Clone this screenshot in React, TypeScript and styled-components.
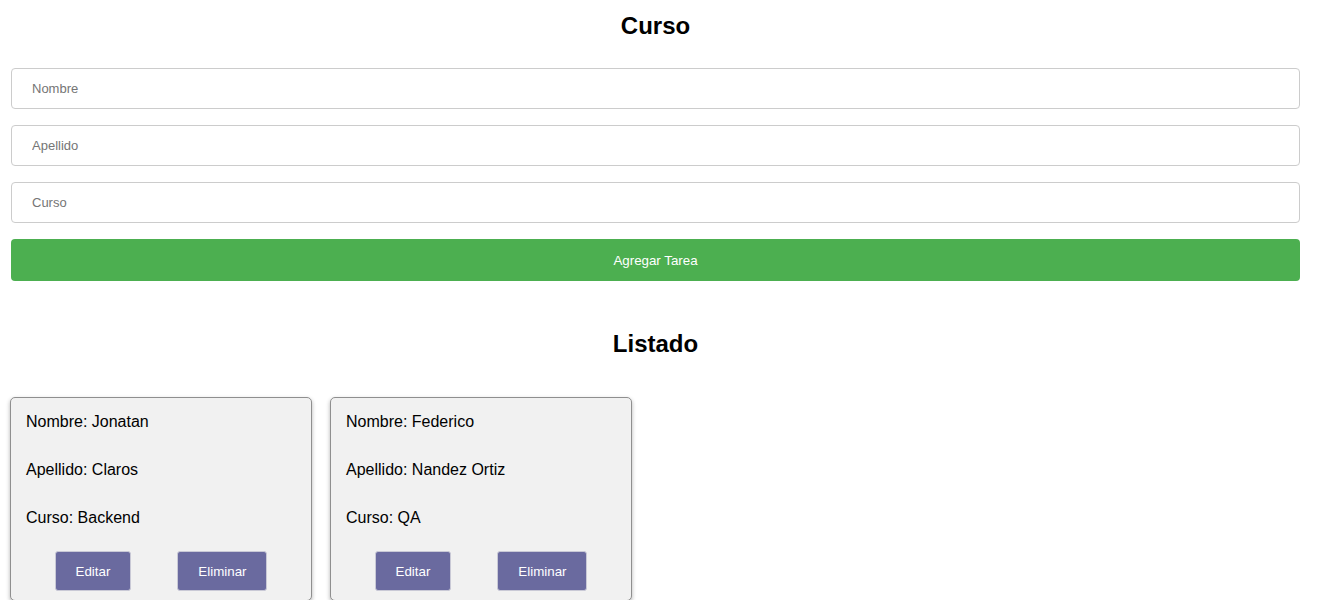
import React from "react";
import styled, { createGlobalStyle } from "styled-components";

const GlobalStyle = createGlobalStyle`
  html, body {
    margin: 0;
    padding: 0;
    background: #ffffff;
    font-family: "Liberation Sans", Arial, sans-serif;
  }
  * { box-sizing: border-box; }
`;

const Page = styled.div`
  width: 1289px;
  margin-left: 11px;
  display: flex;
  flex-direction: column;
`;

const Title = styled.h2`
  margin: 12px 0 0;
  font-size: 24px;
  line-height: 28px;
  font-weight: bold;
  text-align: center;
  color: #000;
`;

const Form = styled.form`
  display: flex;
  flex-direction: column;
  gap: 16px;
  margin-top: 28px;
`;

const Input = styled.input`
  height: 41px;
  width: 100%;
  padding: 0 20px;
  border: 1px solid #cccccc;
  border-radius: 4px;
  font-family: "Liberation Sans", Arial, sans-serif;
  font-size: 13px;
  color: #333;
  outline: none;
  &::placeholder { color: #757575; }
`;

const SubmitButton = styled.button`
  height: 42px;
  width: 100%;
  border: none;
  border-radius: 4px;
  background: #4caf50;
  color: #ffffff;
  font-family: "Liberation Sans", Arial, sans-serif;
  font-size: 13.333px;
  cursor: pointer;
`;

const ListTitle = styled(Title)`
  margin-top: 49px;
`;

const CardRow = styled.div`
  display: flex;
  gap: 18px;
  margin: 39px 0 0 -1px;
`;

const Card = styled.div`
  width: 302px;
  background: #f1f1f1;
  border: 1px solid #8f8f8f;
  border-radius: 5px;
  box-shadow: 0 2px 4px rgba(0, 0, 0, 0.3);
  padding: 15px 0 9px;
  display: flex;
  flex-direction: column;
`;

const Field = styled.p`
  margin: 0 15px 30px;
  font-size: 16px;
  line-height: 18px;
  color: #000;
  &:nth-of-type(3) { margin-bottom: 24px; }
`;

const Actions = styled.div`
  display: flex;
  justify-content: center;
  gap: 46px;
`;

const ActionButton = styled.button`
  height: 40px;
  padding: 0 20px;
  background: #6a6a9f;
  color: #ffffff;
  border: 1px solid #c9c9d6;
  border-radius: 3px;
  font-family: "Liberation Sans", Arial, sans-serif;
  font-size: 13.333px;
  cursor: pointer;
`;

const students = [
  { nombre: "Jonatan", apellido: "Claros", curso: "Backend" },
  { nombre: "Federico", apellido: "Nandez Ortiz", curso: "QA" },
];

export default function App() {
  return (
    <>
      <GlobalStyle />
      <Page>
        <Title>Curso</Title>
        <Form onSubmit={(e) => e.preventDefault()}>
          <Input placeholder="Nombre" />
          <Input placeholder="Apellido" />
          <Input placeholder="Curso" />
          <SubmitButton type="submit">Agregar Tarea</SubmitButton>
        </Form>
        <ListTitle>Listado</ListTitle>
        <CardRow>
          {students.map((s) => (
            <Card key={s.nombre}>
              <Field>Nombre: {s.nombre}</Field>
              <Field>Apellido: {s.apellido}</Field>
              <Field>Curso: {s.curso}</Field>
              <Actions>
                <ActionButton>Editar</ActionButton>
                <ActionButton>Eliminar</ActionButton>
              </Actions>
            </Card>
          ))}
        </CardRow>
      </Page>
    </>
  );
}
